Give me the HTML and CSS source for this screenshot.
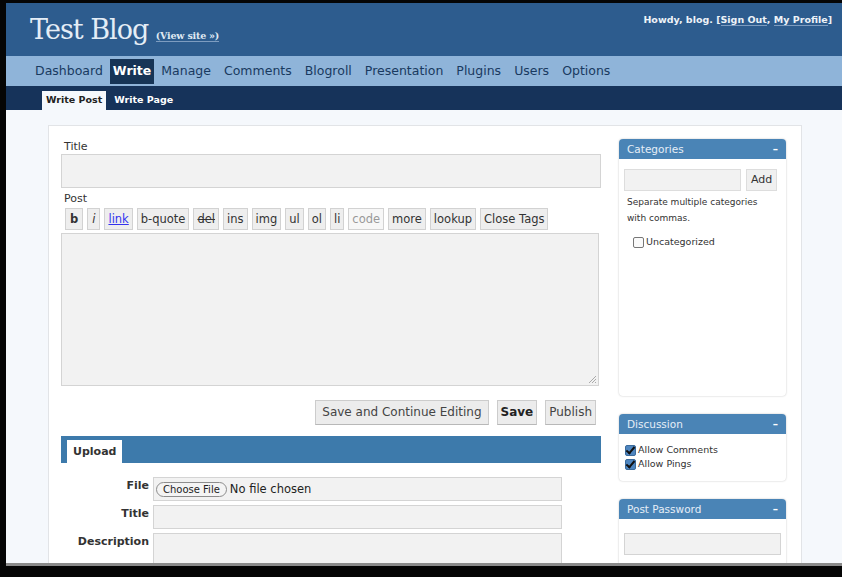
FILE: index.html
```html
<!DOCTYPE html>
<html lang="en">
<head>
    <meta charset="UTF-8">
    <title>Test Blog &rsaquo; Write Post</title>
    <link rel="stylesheet" href="styles.css">
</head>
<body>
    <div class="frame">
        <div class="page">
            <div class="head">
                <h1 class="blog-name">Test Blog <a class="view-site" href="#">(View site &raquo;)</a></h1>
                <div class="user-info">Howdy, blog. [<a href="#">Sign Out</a>, <a href="#">My Profile</a>]</div>
            </div>

            <ul class="menu">
                <li><a href="#">Dashboard</a></li>
                <li class="current"><a href="#">Write</a></li>
                <li><a href="#">Manage</a></li>
                <li><a href="#">Comments</a></li>
                <li><a href="#">Blogroll</a></li>
                <li><a href="#">Presentation</a></li>
                <li><a href="#">Plugins</a></li>
                <li><a href="#">Users</a></li>
                <li><a href="#">Options</a></li>
            </ul>

            <ul class="submenu">
                <li class="current"><a href="#">Write Post</a></li>
                <li><a href="#">Write Page</a></li>
            </ul>

            <div class="content">
                <div class="wrap">
                    <div class="post-col">
                        <label class="field-label">Title</label>
                        <div class="title-input"></div>

                        <label class="field-label">Post</label>
                        <div class="quicktags">
                            <span class="qt qt-b">b</span>
                            <span class="qt qt-i">i</span>
                            <span class="qt qt-link">link</span>
                            <span class="qt">b-quote</span>
                            <span class="qt qt-del">del</span>
                            <span class="qt">ins</span>
                            <span class="qt">img</span>
                            <span class="qt">ul</span>
                            <span class="qt">ol</span>
                            <span class="qt">li</span>
                            <span class="qt qt-code">code</span>
                            <span class="qt">more</span>
                            <span class="qt">lookup</span>
                            <span class="qt">Close Tags</span>
                        </div>
                        <div class="post-area">
                            <svg class="grip" width="9" height="9" viewBox="0 0 9 9"><path d="M8 1 L1 8 M8 4 L4 8 M8 7 L7 8" stroke="#aaa" stroke-width="1"/></svg>
                        </div>

                        <div class="submit-row">
                            <span class="btn">Save and Continue Editing</span>
                            <span class="btn btn-save">Save</span>
                            <span class="btn btn-pub">Publish</span>
                        </div>

                        <div class="upload-bar">
                            <span class="upload-tab">Upload</span>
                        </div>
                        <div class="upload-form">
                            <div class="up-row">
                                <span class="up-label">File</span>
                                <div class="up-input up-file"><span class="choose">Choose File</span> No file chosen</div>
                            </div>
                            <div class="up-row">
                                <span class="up-label">Title</span>
                                <div class="up-input"></div>
                            </div>
                            <div class="up-row">
                                <span class="up-label">Description</span>
                                <div class="up-input up-desc"></div>
                            </div>
                        </div>
                    </div>

                    <div class="sidebar">
                        <div class="box box-cats">
                            <div class="box-head">Categories <span class="toggle">&ndash;</span></div>
                            <div class="box-body">
                                <div class="cat-add">
                                    <div class="cat-input"></div>
                                    <span class="add-btn">Add</span>
                                </div>
                                <p class="hint">Separate multiple categories<br>with commas.</p>
                                <label class="check cat-check"><span class="cb"></span>Uncategorized</label>
                            </div>
                        </div>

                        <div class="box">
                            <div class="box-head">Discussion <span class="toggle">&ndash;</span></div>
                            <div class="box-body disc-body">
                                <label class="check"><span class="cb cb-on"></span>Allow Comments</label>
                                <label class="check"><span class="cb cb-on"></span>Allow Pings</label>
                            </div>
                        </div>

                        <div class="box">
                            <div class="box-head">Post Password <span class="toggle">&ndash;</span></div>
                            <div class="box-body pw-body">
                                <div class="pw-input"></div>
                            </div>
                        </div>
                    </div>
                </div>
            </div>
        </div>
    </div>
</body>
</html>
```

FILE: styles.css
```css
body {
    margin: 0;
    background-color: #050505;
    font-family: "DejaVu Sans", Verdana, sans-serif;
    overflow: hidden;
}

.frame {
    padding: 3px 0 0 6px;
    height: 574px;
}

.page {
    height: 560px;
    background-color: #f5f8fc;
    border-bottom: 3px solid #8a8a8a;
    overflow: hidden;
}

/* Cabecera */
.head {
    height: 53px;
    background-color: #2d5c8e;
    display: flex;
    justify-content: space-between;
    align-items: flex-start;
}

.blog-name {
    margin: 11px 0 0 24px;
    font-family: "DejaVu Serif", Georgia, serif;
    font-weight: normal;
    font-size: 27px;
    letter-spacing: -1px;
    color: #e4edf6;
}

.view-site {
    font-size: 9.5px;
    letter-spacing: -0.2px;
    font-weight: bold;
    color: #dfe8f2;
    text-decoration: none;
    border-bottom: 1px solid #7d9cc0;
}

.user-info {
    margin: 11px 10px 0 0;
    font-size: 9.5px;
    font-weight: bold;
    color: #eef3f8;
}

.user-info a {
    color: #eef3f8;
    text-decoration: none;
    border-bottom: 1px solid #7d9cc0;
}

/* Menu principal */
.menu {
    list-style: none;
    margin: 0;
    padding: 3px 0 0 23px;
    height: 27px;
    background-color: #8fb4d9;
    display: flex;
    gap: 1px;
}

.menu li a {
    display: block;
    padding: 4px 6px 6px;
    font-size: 12.5px;
    color: #193a60;
    text-decoration: none;
}

.menu li.current a {
    padding: 4px 3px 6px;
    background-color: #163456;
    color: #ffffff;
    font-weight: bold;
}

.submenu {
    list-style: none;
    margin: 0;
    padding: 5px 0 0 36px;
    height: 19px;
    background-color: #16335a;
    display: flex;
    gap: 4px;
}

.submenu li a {
    display: block;
    padding: 3px 4px 5px;
    font-size: 9.5px;
    font-weight: bold;
    color: #ffffff;
    text-decoration: none;
}

.submenu li.current a {
    background-color: #f5f8fc;
    color: #222;
}

/* Contenido */
.content {
    padding: 15px 0 0 42px;
}

.wrap {
    width: 740px;
    height: 460px;
    background-color: #ffffff;
    border: 1px solid #e2e4e7;
    padding: 10px 0 0 12px;
    display: flex;
    gap: 18px;
}

.post-col {
    width: 540px;
}

.field-label {
    display: block;
    font-size: 11px;
    color: #333;
    margin: 4px 0 1px 3px;
}

.title-input {
    height: 32px;
    background-color: #f2f2f2;
    border: 1px solid #d4d4d4;
}

.quicktags {
    display: flex;
    gap: 4px;
    margin: 3px 0 3px 4px;
}

.qt {
    padding: 3px 3px;
    font-size: 11.5px;
    color: #333;
    background-color: #eeeeee;
    border: 1px solid #d2d2d2;
}

.qt-b { font-weight: bold; padding: 3px 4px; }
.qt-i { font-style: italic; padding: 3px 4px; }
.qt-link { color: #3333ee; text-decoration: underline; }
.qt-del { text-decoration: line-through; }
.qt-code { color: #999; background-color: #f7f7f7; }

.post-area {
    position: relative;
    width: 536px;
    height: 151px;
    background-color: #f2f2f2;
    border: 1px solid #d4d4d4;
}

.grip {
    position: absolute;
    right: 1px;
    bottom: 1px;
}

.submit-row {
    display: flex;
    justify-content: flex-end;
    gap: 8px;
    margin: 14px 5px 0 0;
}

.btn {
    padding: 4px 6px 5px;
    font-size: 12px;
    color: #444;
    background-color: #ececec;
    border: 1px solid #cccccc;
    border-bottom-color: #b8b8b8;
}

.btn-save {
    padding: 4px 3px 5px;
    font-weight: bold;
    color: #222;
}

.btn-pub {
    padding: 4px 3px 5px;
}

.upload-bar {
    margin-top: 11px;
    height: 27px;
    background-color: #3d7aab;
    padding: 4px 0 0 6px;
    box-sizing: border-box;
}

.upload-tab {
    display: inline-block;
    padding: 5px 6px 5px;
    font-size: 11px;
    font-weight: bold;
    color: #333;
    background-color: #ffffff;
}

.upload-form {
    padding-top: 14px;
}

.up-row {
    display: flex;
    gap: 4px;
    margin-bottom: 4px;
}

.up-label {
    width: 88px;
    text-align: right;
    font-size: 11px;
    font-weight: bold;
    color: #333;
    padding-top: 2px;
}

.up-input {
    width: 407px;
    height: 22px;
    background-color: #f2f2f2;
    border: 1px solid #d4d4d4;
}

.up-file {
    display: flex;
    align-items: center;
    gap: 3px;
    font-size: 11.5px;
    color: #222;
}

.choose {
    margin-left: 2px;
    padding: 1px 6px;
    font-size: 10px;
    border: 1px solid #8d8d8d;
    border-radius: 9px;
    background-color: #f4f4f4;
}

.up-desc {
    height: 34px;
}

/* Barra lateral */
.sidebar {
    width: 167px;
    padding-top: 3px;
}

.box {
    margin-bottom: 18px;
    background-color: #ffffff;
    border-radius: 4px;
    box-shadow: 0 0 2px rgba(0, 0, 0, 0.25);
}

.box-head {
    display: flex;
    justify-content: space-between;
    height: 20px;
    padding: 0 8px;
    background-color: #4a84b6;
    border-radius: 4px 4px 0 0;
    font-size: 10.5px;
    line-height: 20px;
    color: #e6eef6;
}

.toggle {
    font-weight: bold;
    color: #ffffff;
}

.box-body {
    padding: 10px 5px 12px;
}

.box-cats .box-body {
    height: 237px;
    box-sizing: border-box;
}

.cat-add {
    display: flex;
    gap: 5px;
}

.cat-input {
    width: 115px;
    height: 20px;
    background-color: #f2f2f2;
    border: 1px solid #dddddd;
}

.add-btn {
    padding: 3px 4px;
    font-size: 11px;
    color: #333;
    background-color: #f0f0f0;
    border: 1px solid #dddddd;
}

.hint {
    margin: 3px 0 9px 3px;
    font-size: 9px;
    line-height: 16px;
    color: #333;
}

.check {
    display: flex;
    align-items: center;
    gap: 2px;
    font-size: 9.5px;
    color: #333;
    line-height: 14px;
}

.cat-check {
    margin-left: 9px;
}

.cb {
    display: inline-block;
    width: 9px;
    height: 9px;
    border: 1px solid #777;
    border-radius: 2px;
    background-color: #fafafa;
}

.cb-on {
    background-color: #4f86c0;
    border-color: #3b6b9c;
    position: relative;
}

.cb-on::after {
    content: "";
    position: absolute;
    left: 2px;
    top: -1px;
    width: 3px;
    height: 7px;
    border: solid #111;
    border-width: 0 2px 2px 0;
    transform: rotate(40deg);
}

.disc-body {
    padding: 9px 6px 10px;
}

.pw-body {
    padding-top: 14px;
}

.pw-input {
    height: 20px;
    background-color: #f2f2f2;
    border: 1px solid #d4d4d4;
}
```
